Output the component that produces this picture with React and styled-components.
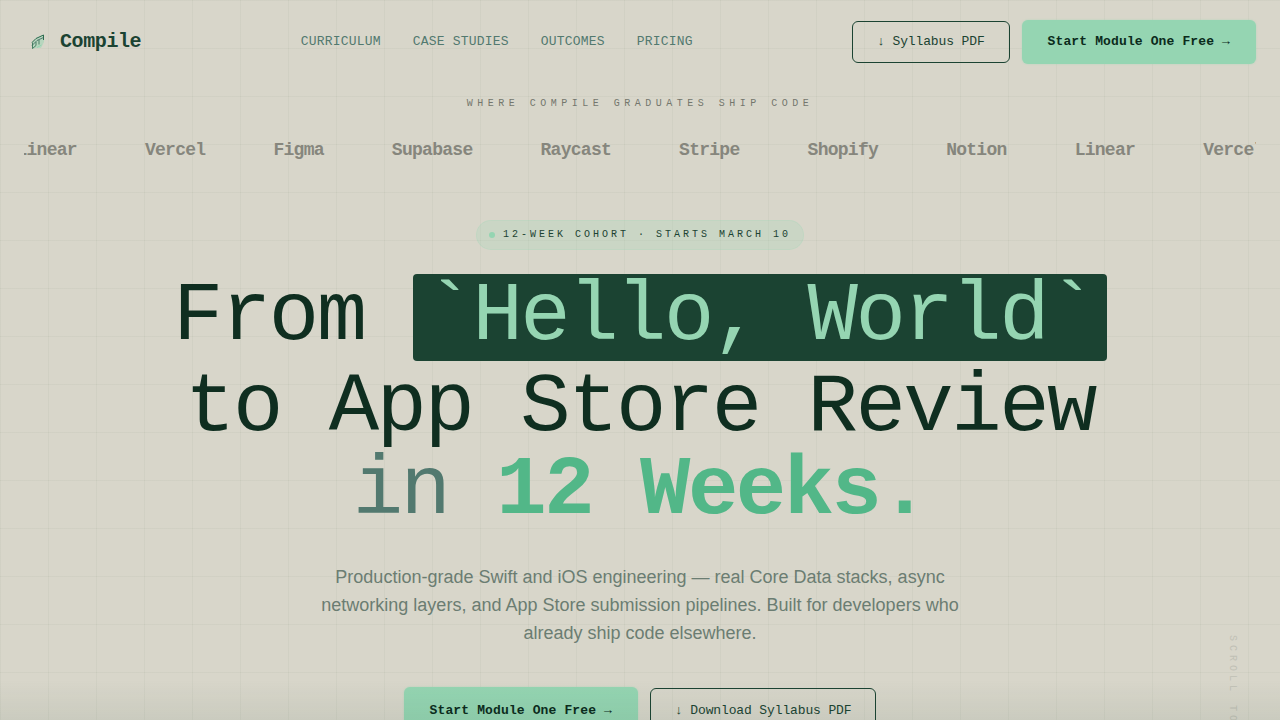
import React from "react";
import styled, { createGlobalStyle } from "styled-components";

const mono = `"Liberation Mono", "Courier New", monospace`;
const sans = `"Liberation Sans", Arial, sans-serif`;

const GlobalStyle = createGlobalStyle`
  * {
    box-sizing: border-box;
  }
  html {
    scrollbar-width: none;
  }
  body {
    margin: 0;
    background-color: #d8d6ca;
    font-family: ${sans};
    color: #0f2e20;
  }
`;

const Page = styled.div`
  position: relative;
  min-height: 100vh;
  padding-bottom: 80px;
  background-image: linear-gradient(rgba(27, 67, 50, 0.04) 1px, transparent 1px),
    linear-gradient(90deg, rgba(27, 67, 50, 0.04) 1px, transparent 1px);
  background-size: 48px 48px;
`;

const Header = styled.header`
  display: flex;
  align-items: center;
  justify-content: space-between;
  height: 84px;
  padding: 0 24px;
`;

const Logo = styled.a`
  display: flex;
  align-items: center;
  gap: 8px;
  padding-bottom: 2px;
  font-family: ${mono};
  font-weight: 700;
  font-size: 20px;
  letter-spacing: -0.02em;
  color: #1b4332;
  text-decoration: none;
`;

const Nav = styled.nav`
  display: flex;
  gap: 32px;
`;

const NavLink = styled.a`
  font-family: ${mono};
  font-size: 13px;
  line-height: 16px;
  letter-spacing: 0.015em;
  text-transform: uppercase;
  text-decoration: none;
  color: #52796f;
`;

const Actions = styled.div`
  display: flex;
  align-items: center;
  gap: 12px;
`;

const Button = styled.button`
  height: ${({ $large }) => ($large ? 46 : 42)}px;
  padding: 0 24px 2px;
  border: 1px solid #1b4332;
  border-radius: 6px;
  background-color: transparent;
  font-family: ${mono};
  font-weight: 400;
  font-size: 13px;
  letter-spacing: -0.01em;
  white-space: nowrap;
  color: #1b4332;
  cursor: pointer;
`;

const PrimaryButton = styled(Button)`
  height: ${({ $large }) => ($large ? 48 : 44)}px;
  padding: 0 26px 2px;
  border: none;
  background-color: #95d5b2;
  font-weight: 700;
  letter-spacing: 0.01em;
  color: #0b2b1c;
  box-shadow: 0 0 2px rgba(149, 213, 178, 0.6);
`;

const Graduates = styled.section`
  display: flex;
  flex-direction: column;
  align-items: center;
  gap: 26px;
  padding: 12px 24px 0;
`;

const GraduatesLabel = styled.p`
  margin: 0;
  font-family: ${mono};
  font-size: 10px;
  line-height: 16px;
  letter-spacing: 0.45em;
  text-transform: uppercase;
  color: #74766d;
`;

const Companies = styled.ul`
  display: flex;
  justify-content: center;
  gap: 68px;
  width: 100%;
  margin: 0;
  padding: 0;
  overflow: hidden;
  list-style: none;
`;

const Company = styled.li`
  flex: none;
  font-family: ${mono};
  font-weight: 700;
  font-size: 18px;
  line-height: 24px;
  letter-spacing: -0.04em;
  color: #86867d;
`;

const Hero = styled.main`
  display: flex;
  flex-direction: column;
  align-items: center;
  padding: 58px 24px 0;
  text-align: center;
`;

const Badge = styled.div`
  display: flex;
  align-items: center;
  gap: 8px;
  height: 30px;
  padding: 0 12px;
  border: 1px solid rgba(149, 213, 178, 0.2);
  border-radius: 15px;
  background-color: rgba(149, 213, 178, 0.2);
  font-family: ${mono};
  font-size: 10px;
  line-height: 14px;
  letter-spacing: 0.3em;
  text-transform: uppercase;
  color: #1b4332;
`;

const Dot = styled.span`
  width: 6px;
  height: 6px;
  border-radius: 50%;
  background-color: #95d5b2;
`;

const Title = styled.h1`
  margin: 22px 0 0;
  font-family: ${mono};
  font-weight: 400;
  font-size: 84px;
  line-height: 83px;
  letter-spacing: -0.03em;
  color: #0f2e20;
`;

const Code = styled.code`
  display: inline-block;
  margin: 2px 0 5px;
  padding: 1px 12px 3px;
  border-radius: 4px;
  background-color: #1b4332;
  font-family: inherit;
  color: #95d5b2;
`;

const Muted = styled.span`
  color: #52796f;
`;

const Strong = styled.strong`
  font-weight: 700;
  color: #52b788;
`;

const Lead = styled.p`
  max-width: 640px;
  margin: 31px 0 40px;
  font-size: 18px;
  line-height: 28px;
  color: #6b7d72;
`;

const ScrollHint = styled.span`
  position: absolute;
  top: 635px;
  right: 42px;
  writing-mode: vertical-rl;
  font-family: ${mono};
  font-size: 10px;
  line-height: 12px;
  letter-spacing: 0.4em;
  text-transform: uppercase;
  color: #c0c0b5;
`;

const Fade = styled.div`
  position: fixed;
  right: 0;
  bottom: 0;
  left: 0;
  height: 40px;
  background-image: linear-gradient(transparent, rgba(27, 67, 50, 0.07));
  pointer-events: none;
`;

const links = ["Curriculum", "Case Studies", "Outcomes", "Pricing"];

const companies = [
  "Linear",
  "Vercel",
  "Figma",
  "Supabase",
  "Raycast",
  "Stripe",
  "Shopify",
  "Notion",
  "Linear",
  "Vercel",
];

const LogoMark = () => (
  <svg width="28" height="28" viewBox="0 0 28 28" fill="none" aria-hidden="true">
    <path d="M8 22V15.5L13 10.5L20 7.5V15L17 21H12Z" fill="#95d5b2" fillOpacity="0.5" />
    <path d="M8 18.5L13 13.5L19.5 10.5" stroke="#52796f" />
    <path d="M8 15.5L12 11.5L19.5 8V13" stroke="#2d6a4f" />
    <path d="M8.5 15.5V21.5L12 18.5V15M15 13V17.5" stroke="#2d6a4f" strokeOpacity="0.8" />
    <path d="M13 20.5L17.5 18" stroke="#95d5b2" />
  </svg>
);

const App = () => (
  <>
    <GlobalStyle />
    <Page>
      <Header>
        <Logo href="#">
          <LogoMark />
          Compile
        </Logo>
        <Nav>
          {links.map((link) => (
            <NavLink key={link} href="#">
              {link}
            </NavLink>
          ))}
        </Nav>
        <Actions>
          <Button>↓ Syllabus PDF</Button>
          <PrimaryButton>Start Module One Free →</PrimaryButton>
        </Actions>
      </Header>
      <Graduates>
        <GraduatesLabel>Where Compile graduates ship code</GraduatesLabel>
        <Companies>
          {companies.map((company, index) => (
            <Company key={index}>{company}</Company>
          ))}
        </Companies>
      </Graduates>
      <Hero>
        <Badge>
          <Dot />
          12-Week Cohort · Starts March 10
        </Badge>
        <Title>
          From <Code>`Hello, World`</Code>
          <br />
          to App Store Review
          <br />
          <Muted>in</Muted> <Strong>12 Weeks.</Strong>
        </Title>
        <Lead>
          Production-grade Swift and iOS engineering — real Core Data stacks,
          async networking layers, and App Store submission pipelines. Built for
          developers who already ship code elsewhere.
        </Lead>
        <Actions>
          <PrimaryButton $large>Start Module One Free →</PrimaryButton>
          <Button $large>↓ Download Syllabus PDF</Button>
        </Actions>
      </Hero>
      <ScrollHint>Scroll to explore</ScrollHint>
      <Fade />
    </Page>
  </>
);

export default App;
